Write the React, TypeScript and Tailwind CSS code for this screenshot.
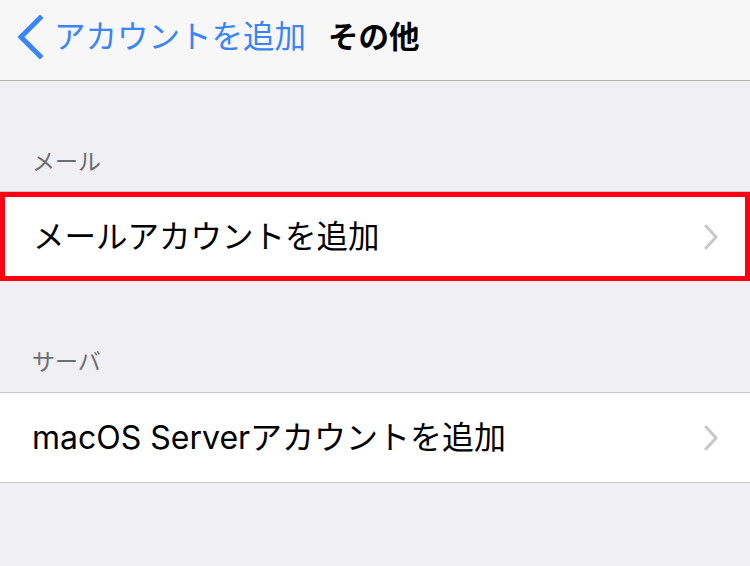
const font = { fontFamily: 'Inter, "Noto Sans CJK JP", sans-serif' };

const RowChevron = () => (
  <svg width="14" height="26" viewBox="0 0 14 26" className="shrink-0">
    <path
      d="M2 2 L12 13 L2 24"
      fill="none"
      stroke="#c7c7cc"
      strokeWidth="3"
      strokeLinecap="round"
      strokeLinejoin="round"
    />
  </svg>
);

const SectionHeader = ({ title, tall }: { title: string; tall?: boolean }) => (
  <div
    className={
      tall
        ? "flex h-[111px] items-end px-[32px] pb-[16px]"
        : "flex h-[110px] items-end px-[32px] pb-[15px]"
    }
  >
    <span className="text-[23px] leading-[28px] text-[#6d6d72]">{title}</span>
  </div>
);

export default function App() {
  return (
    <div
      className="flex h-[566px] w-[750px] flex-col overflow-hidden bg-[#efeff4]"
      style={font}
    >
      {/* nav bar */}
      <div className="flex h-[81px] shrink-0 items-center border-b border-[#b2b2b2] bg-[#f7f7f8] pb-[6px]">
        <div className="flex items-center pl-[10px]">
          <svg width="36" height="46" viewBox="0 0 36 46">
            <path
              d="M30 4 L11 23 L30 42"
              fill="none"
              stroke="#3a85f5"
              strokeWidth="5"
              strokeLinecap="square"
            />
          </svg>
          <span className="ml-[8px] text-[31.5px] leading-none text-[#3a85f5]">
            アカウントを追加
          </span>
        </div>
        <span className="ml-[22px] text-[30.5px] font-bold leading-none text-black">
          その他
        </span>
      </div>

      <SectionHeader title="メール" />

      {/* highlighted row */}
      <div className="border-t border-[#c8c7cc]">
        <div className="flex h-[89px] items-center justify-between border-[5px] border-[#ff0010] bg-white pl-[28px] pr-[27px]">
          <span className="text-[31.5px] leading-none text-black">
            メールアカウントを追加
          </span>
          <RowChevron />
        </div>
      </div>

      <SectionHeader title="サーバ" tall />

      <div className="flex h-[91px] items-center justify-between border-y border-[#c8c7cc] bg-white pl-[32px] pr-[32px]">
        <span className="text-[32px] leading-none text-black">
          macOS Serverアカウントを追加
        </span>
        <RowChevron />
      </div>
    </div>
  );
}
